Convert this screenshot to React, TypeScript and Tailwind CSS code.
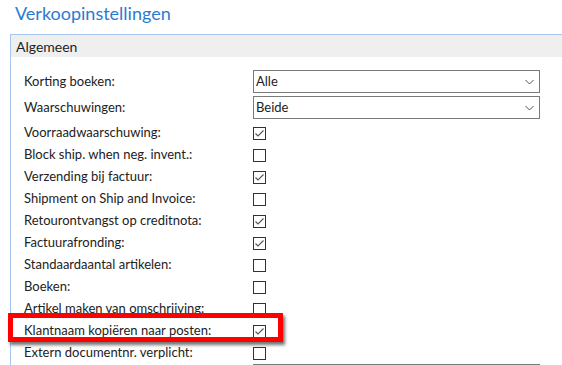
import React from 'react';

type Row =
  | { label: string; kind: 'select'; value: string }
  | { label: string; kind: 'check'; checked: boolean };

const rows: Row[] = [
  { label: 'Korting boeken:', kind: 'select', value: 'Alle' },
  { label: 'Waarschuwingen:', kind: 'select', value: 'Beide' },
  { label: 'Voorraadwaarschuwing:', kind: 'check', checked: true },
  { label: 'Block ship. when neg. invent.:', kind: 'check', checked: false },
  { label: 'Verzending bij factuur:', kind: 'check', checked: true },
  { label: 'Shipment on Ship and Invoice:', kind: 'check', checked: false },
  { label: 'Retourontvangst op creditnota:', kind: 'check', checked: true },
  { label: 'Factuurafronding:', kind: 'check', checked: true },
  { label: 'Standaardaantal artikelen:', kind: 'check', checked: false },
  { label: 'Boeken:', kind: 'check', checked: false },
  { label: 'Artikel maken van omschrijving:', kind: 'check', checked: false },
  { label: 'Klantnaam kopiëren naar posten:', kind: 'check', checked: true },
  { label: 'Extern documentnr. verplicht:', kind: 'check', checked: false },
];

const Checkbox: React.FC<{ checked: boolean }> = ({ checked }) => (
  <span className="flex h-[13px] w-[13px] items-center justify-center border border-[#333333] bg-white">
    {checked && (
      <svg width="11" height="11" viewBox="0 0 11 11" fill="none">
        <path d="M1.5 5.5 L4 8 L9.5 2.5" stroke="#555555" strokeWidth="1.1" />
      </svg>
    )}
  </span>
);

const Select: React.FC<{ value: string }> = ({ value }) => (
  <div className="flex h-[23px] w-[287px] items-center justify-between border border-[#7a7a7a] bg-white pl-[2px] pr-[5px]">
    <span>{value}</span>
    <svg width="9" height="6" viewBox="0 0 9 6" fill="none">
      <path d="M0.5 1 L4.5 5 L8.5 1" stroke="#555555" strokeWidth="1" />
    </svg>
  </div>
);

export default function App() {
  return (
    <div
      className="relative h-[365px] w-[562px] overflow-hidden bg-white text-[#222222]"
      style={{ fontFamily: '"Segoe UI", Lato, "Open Sans", sans-serif' }}
    >
      <h1 className="flex h-[34px] items-center pl-[15px] pb-[7px] text-[18px] font-normal text-[#2b7bd2]">
        Verkoopinstellingen
      </h1>

      <section className="ml-[10px] border-l border-t border-[#a6c6ee]">
        <div className="flex h-[22px] items-center bg-[#efefef] pl-[5px] text-[14px] text-[#1f1f1f]">
          Algemeen
        </div>

        <div className="pt-[13px] pl-[13px] text-[13px]">
          {rows.map((row) =>
            row.kind === 'select' ? (
              <div key={row.label} className="flex h-[26px] items-start">
                <span className="flex h-[23px] w-[229px] items-center">{row.label}</span>
                <Select value={row.value} />
              </div>
            ) : (
              <div key={row.label} className="flex h-[22px] items-center">
                <span className="w-[229px]">{row.label}</span>
                <Checkbox checked={row.checked} />
              </div>
            )
          )}
          <div className="ml-[229px] h-[2px] w-[287px] border-t border-[#7a7a7a]" />
        </div>
      </section>

      <div className="absolute left-[8px] top-[313px] h-[29px] w-[275px] border-[5px] border-[#ff0000] shadow-[2px_3px_3px_rgba(0,0,0,0.55)]" />
    </div>
  );
}
